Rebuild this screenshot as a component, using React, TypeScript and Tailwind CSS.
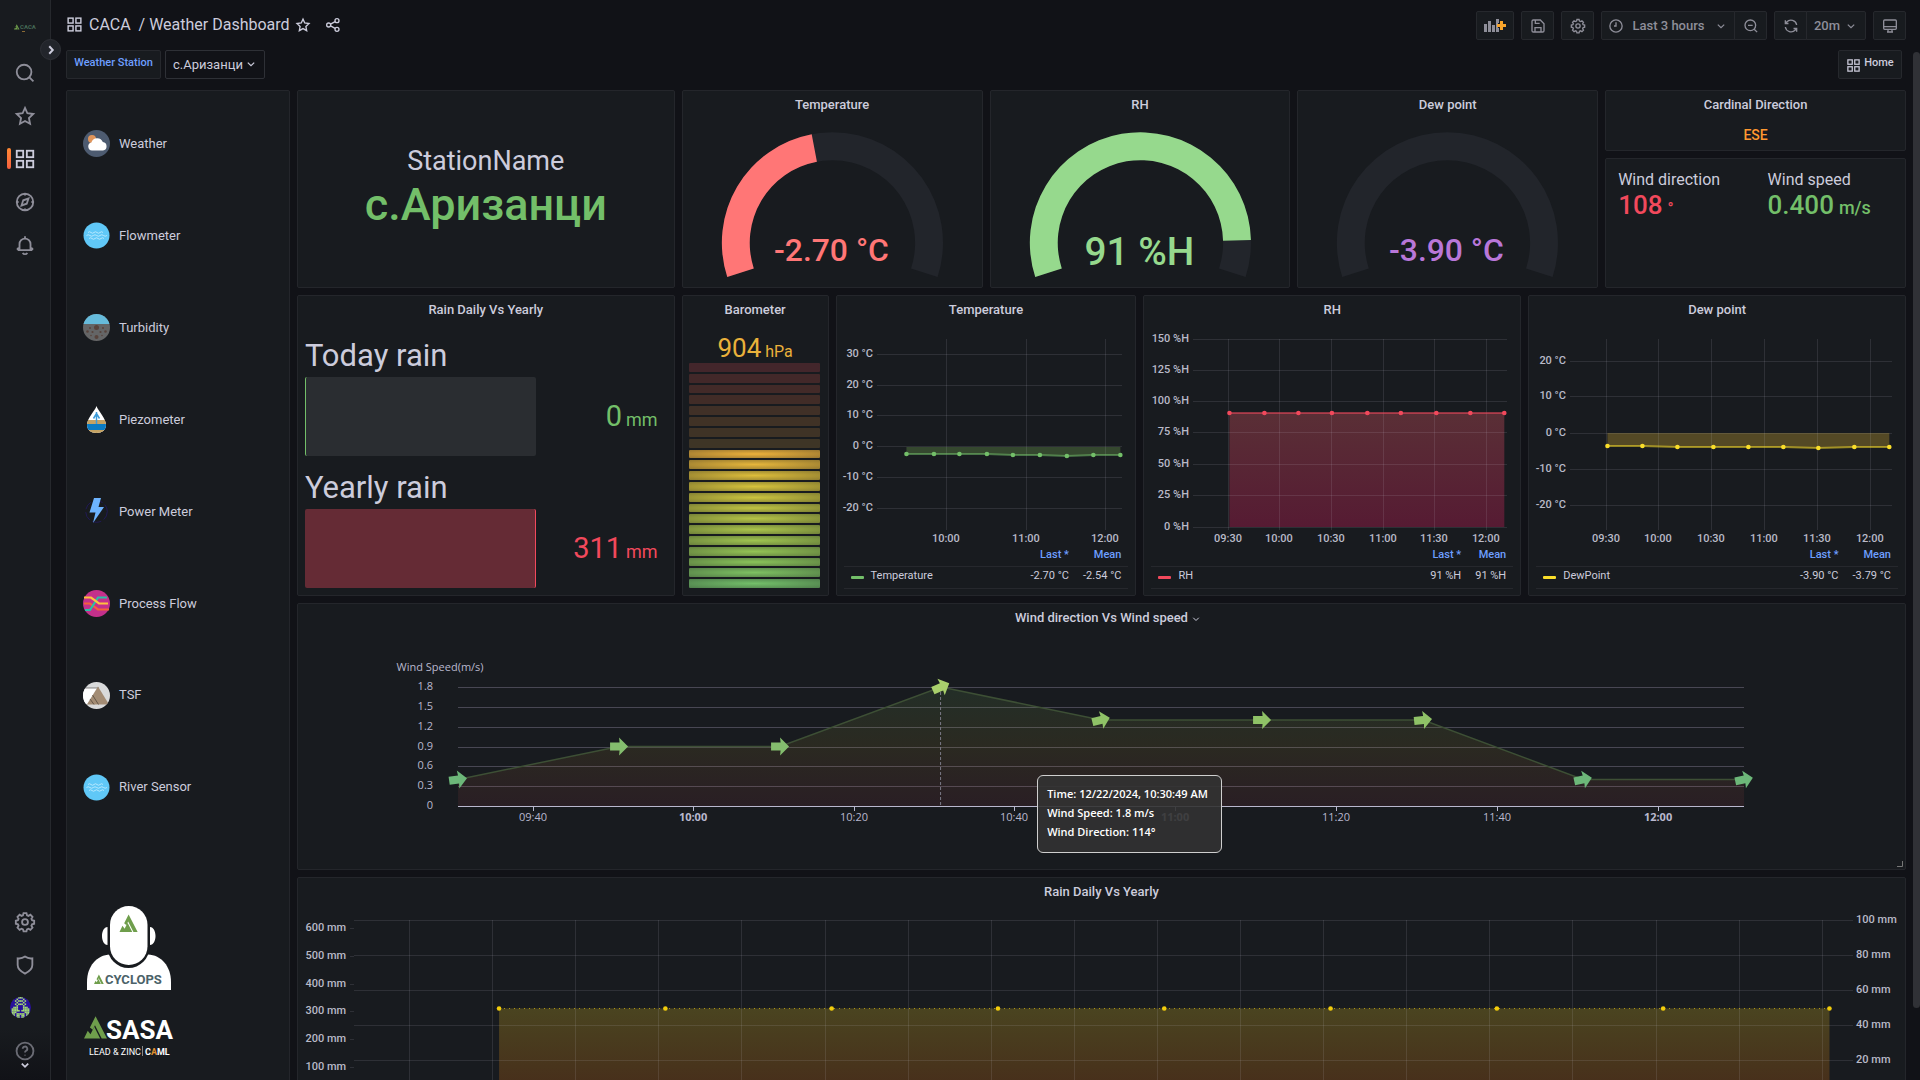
import React from "react";

const ICONS: Record<string, React.ReactNode> = {
  apps: (
    <>
      <rect x="3" y="3" width="7" height="7" />
      <rect x="14" y="3" width="7" height="7" />
      <rect x="3" y="14" width="7" height="7" />
      <rect x="14" y="14" width="7" height="7" />
    </>
  ),
  search: (
    <>
      <circle cx="11" cy="11" r="8" />
      <path d="M16.8 16.8 21.2 21.2" />
    </>
  ),
  star: <path d="M12 3.2 14.6 9l6.4.8-4.7 4.4 1.2 6.3L12 17.4l-5.5 3.1 1.2-6.3L3 9.800l6.400-.8Z" />,
  share: (
    <>
      <circle cx="18" cy="5.500" r="3" />
      <circle cx="5.500" cy="12" r="3" />
      <circle cx="18" cy="18.500" r="3" />
      <path d="M8.300 10.700 15.200 6.900M8.300 13.300l6.900 3.800" />
    </>
  ),
  compass: (
    <>
      <circle cx="12" cy="12" r="9" />
      <path d="m15.800 8.200-1.900 5.700-5.700 1.900 1.900-5.700ZM12 3v2M12 19v2M3 12h2M19 12h2" />
    </>
  ),
  bell: (
    <>
      <path d="M6 17v-6a6 6 0 0 1 12 0v6M4 17.500h16M4 17.500V16l2-1M20 17.500V16l-2-1M12 5V2.500" />
      <path d="M9.500 20.500a2.800 2.800 0 0 0 5 0" />
    </>
  ),
  shield: <path d="M4 4.800c3 .4 5.500-.2 8-2 2.500 1.800 5 2.400 8 2V12c0 4-3 7-8 9.400C7 19 4 16 4 12Z" />,
  help: (
    <>
      <circle cx="12" cy="12" r="9.200" />
      <path d="M9.500 9.600a2.500 2.500 0 1 1 3.700 2.200c-.9.5-1.200.9-1.200 1.900M12 16.200v.8" />
    </>
  ),
  save: (
    <>
      <path d="M3 5a2 2 0 0 1 2-2h10.500L21 8.500V19a2 2 0 0 1-2 2H5a2 2 0 0 1-2-2Z" />
      <path d="M7.500 21v-6.500h9V21M8 3v5h6.500" />
    </>
  ),
  gear: (
    <>
      <path d="M10.400 2.300h3.200l.6 2.300 1.600.7 2.100-1.200 2.300 2.300-1.200 2.100.7 1.600 2.300.6v3.200l-2.300.6-.7 1.600 1.200 2.100-2.300 2.300-2.100-1.200-1.600.7-.6 2.300h-3.200l-.6-2.300-1.600-.7-2.100 1.200-2.300-2.300L5 16.100 4.300 14.500 2 13.900v-3.200l2.300-.6L5 8.500 3.800 6.400l2.300-2.300 2.100 1.200 1.600-.7Z" />
      <circle cx="12" cy="12" r="3.200" />
    </>
  ),
  clock: (
    <>
      <circle cx="12" cy="12" r="9.200" />
      <path d="M12 6.500V12H9" />
    </>
  ),
  zoomOut: (
    <>
      <circle cx="11" cy="11" r="8" />
      <path d="M16.800 16.800 21.200 21.200M7.500 11h7" />
    </>
  ),
  sync: (
    <>
      <path d="M20.500 10.500A8.700 8.700 0 0 0 5.600 6L3.500 8.200M3.500 3.500v4.700h4.700M3.500 13.500A8.700 8.700 0 0 0 18.400 18l2.100-2.200M20.500 20.500v-4.700h-4.700" />
    </>
  ),
  monitor: (
    <>
      <rect x="2.500" y="3" width="19" height="14" rx="1.500" />
      <path d="M2.500 13h19M9 17v4M15 17v4M7.500 21h9" />
    </>
  ),
  down: <path d="m6.500 9.500 5.500 5.500 5.500-5.500" />,
  right: <path d="m8.500 4.500 7 7.500-7 7.500" />,
};

function Icon({ name, className = "size-4", stroke = 2 }: { name: string; className?: string; stroke?: number }) {
  return (
    <svg viewBox="0 0 24 24" className={`shrink-0 ${className}`} fill="none" stroke="currentColor" strokeWidth={stroke} aria-hidden="true">
      {ICONS[name]}
    </svg>
  );
}

/* ---------- sidebar ---------- */

function Peak({ x, y, s, color = "#6f9e4c" }: { x: number; y: number; s: number; color?: string }) {
  return (
    <g transform={`translate(${x} ${y}) scale(${s})`} fill={color}>
      <path d="M5 10.500 9.800 1l9.700 19H15L9.300 8.600 7.500 12.500Z" />
      <path d="M0 20 3.200 13.300l2.300 3L8.700 10l5 10Z" />
    </g>
  );
}

const AVATAR = [
  ".....111.....",
  ".1..1...1..1.",
  "...1.111.1...",
  "....1...1....",
  "...1.111.1...",
  "....1...1....",
  "..111...111..",
  ".1111...1111.",
  ".11111.11111.",
  ".111.....111.",
  ".11.11111.11.",
  "..1.11.11.1..",
  "....11.11....",
];

function Avatar() {
  return (
    <svg viewBox="0 0 26 26" className="size-[21px]" aria-hidden="true">
      <clipPath id="avatar">
        <circle cx="13" cy="13" r="13" />
      </clipPath>
      <g clipPath="url(#avatar)">
        <rect width="26" height="26" fill="#28109c" />
        {AVATAR.flatMap((row, r) =>
          [...row].map((c, i) => (c === "1" ? <rect key={`${r}-${i}`} x={i * 2} y={r * 2} width="2" height="2" fill="#a5dd72" /> : null)),
        )}
      </g>
    </svg>
  );
}

function NavButton({ label, icon, active }: { label: string; icon: string; active?: boolean }) {
  return (
    <button aria-label={label} className={`relative flex h-[43px] w-full items-center justify-center ${active ? "text-[#ccccdc]" : "text-[#8e8e99]"}`}>
      {active && <span className="absolute top-[11px] left-[7px] h-[21px] w-1 rounded-[2px] bg-linear-to-b from-[#ff8833] to-[#f55f3e]" />}
      <Icon name={icon} className="size-[22px]" />
    </button>
  );
}

function Sidebar() {
  return (
    <aside className="relative z-10 flex w-[51px] shrink-0 flex-col border-r border-[#26282d] bg-[#181b1f]">
      <a href="#home" aria-label="Home" className="flex h-[51px] items-center justify-center pt-1">
        <svg viewBox="0 0 24 10" className="h-[10px] w-6">
          <Peak x={1} y={1} s={0.28} />
          <text x="7" y="6" fontSize="6" fontWeight="700" fill="#456a55" fontFamily="Roboto, sans-serif">
            CACA
          </text>
          <rect x="9" y="8" width="3" height="1" fill="#8a6a35" />
        </svg>
      </a>
      <button aria-label="Expand menu" className="absolute top-[39px] left-[40px] flex size-[21px] items-center justify-center rounded-full border border-[#2e3036] bg-[#22252b] text-[#ccccdc]">
        <Icon name="right" className="size-3" stroke={4} />
      </button>
      <nav className="flex flex-1 flex-col">
        <NavButton label="Search" icon="search" />
        <NavButton label="Starred" icon="star" />
        <NavButton label="Dashboards" icon="apps" active />
        <NavButton label="Explore" icon="compass" />
        <NavButton label="Alerting" icon="bell" />
        <div className="mt-auto">
          <NavButton label="Configuration" icon="gear" />
          <NavButton label="Server admin" icon="shield" />
          <button aria-label="Profile" className="flex h-[43px] w-full items-center pl-[10px]">
            <Avatar />
          </button>
        </div>
      </nav>
      <button aria-label="Help" className="flex h-[51px] flex-col items-center bg-linear-to-b from-[#181b1f] to-[#111217] pt-[11px] text-[#6b6c75]">
        <Icon name="help" className="size-[22px]" />
        <Icon name="down" className="-mt-1 size-[14px] text-[#ccccdc]" stroke={3} />
      </button>
    </aside>
  );
}

/* ---------- header ---------- */

const toolBtn = "flex h-[29px] items-center justify-center border border-[#26282d] bg-[#181b1f] text-[#8e8e99]";

function Header() {
  return (
    <header className="flex h-[50px] items-start justify-between pt-[11px]">
      <div className="flex h-[27px] items-center text-[#ccccdc]">
        <Icon name="apps" className="mr-[6px] size-[17px]" />
        <h1 className="text-base whitespace-pre">
          <a href="#caca">CACA</a>
          {"  / "}
          <a href="#dashboard">Weather Dashboard</a>
        </h1>
        <button aria-label="Mark as favorite" className="mt-px ml-[5px]">
          <Icon name="star" />
        </button>
        <button aria-label="Share dashboard" className="mt-px ml-[14px]">
          <Icon name="share" />
        </button>
      </div>
      <div className="flex gap-[7px] text-[13px] font-medium">
        <button aria-label="Add panel" className={`${toolBtn} w-[38px] rounded-[2px]`}>
          <svg viewBox="0 0 22 14" className="h-[14px] w-[22px]">
            <path fill="#8e8e99" d="M0 5h3v8H0ZM4 2h3v11H4ZM8 6h3v7H8ZM12 0h3v4h-1v5h1v4h-3Z" />
            <path fill="#f9a52b" d="M16 2h3v3h3v3h-3v3h-3V8h-3V5h3Z" />
          </svg>
        </button>
        <button aria-label="Save dashboard" className={`${toolBtn} w-[33px] rounded-[2px]`}>
          <Icon name="save" />
        </button>
        <button aria-label="Dashboard settings" className={`${toolBtn} w-[33px] rounded-[2px]`}>
          <Icon name="gear" />
        </button>
        <div className="flex">
          <button className={`${toolBtn} w-[134px] rounded-l-[2px]`}>
            <Icon name="clock" />
            <span className="mr-[9px] ml-2">Last 3 hours</span>
            <Icon name="down" className="size-[14px]" />
          </button>
          <button aria-label="Zoom out time range" className={`${toolBtn} -ml-px w-[33px] rounded-r-[2px]`}>
            <Icon name="zoomOut" />
          </button>
        </div>
        <div className="flex">
          <button aria-label="Refresh dashboard" className={`${toolBtn} w-[33px] rounded-l-[2px]`}>
            <Icon name="sync" />
          </button>
          <button className={`${toolBtn} -ml-px w-[60px] gap-1 rounded-r-[2px]`}>
            20m
            <Icon name="down" className="size-[14px]" />
          </button>
        </div>
        <button aria-label="Cycle view mode" className={`${toolBtn} w-[33px] rounded-[2px]`}>
          <Icon name="monitor" />
        </button>
      </div>
    </header>
  );
}

function Submenu() {
  return (
    <div className="flex gap-1 pr-1">
      <label htmlFor="station" className="flex h-[29px] w-[95px] items-center justify-center rounded-[2px] border border-[#26282d] bg-[#181b1f] pb-[2px] text-[11px] font-medium text-[#6e9fff]">
        Weather Station
      </label>
      <div className="relative h-[29px]">
        <select id="station" className="h-full w-[100px] appearance-none rounded-[2px] border border-[#2e3036] bg-[#111217] pl-[7px] text-[13px] text-[#ccccdc]">
          <option>с.Аризанци</option>
        </select>
        <Icon name="down" className="pointer-events-none absolute top-[7px] right-[7px] size-[14px] text-[#ccccdc]" />
      </div>
      <a href="#home" className="ml-auto flex h-[29px] w-16 items-center justify-center gap-[3px] rounded-[2px] border border-[#26282d] bg-[#181b1f] text-[11px] font-medium text-[#ccccdc]">
        <Icon name="apps" className="mt-[2px] size-[15px]" />
        <span className="pb-[2px]">Home</span>
      </a>
    </div>
  );
}

/* ---------- panels ---------- */

function Panel({ title, caret, className = "", children }: { title?: string; caret?: boolean; className?: string; children?: React.ReactNode }) {
  return (
    <section className={`flex min-w-0 flex-col rounded-[2px] border border-[#24262b] bg-[#181b1f] ${className}`}>
      {title && (
        <h2 className="flex h-7 shrink-0 items-center justify-center text-[13px] font-medium text-[#ccccdc]">
          <span className="relative">
            {title}
            {caret && <Icon name="down" className="absolute top-[5px] left-full ml-[2px] size-3" />}
          </span>
        </h2>
      )}
      {children}
    </section>
  );
}

function arc(cx: number, cy: number, ro: number, ri: number, a0: number, a1: number) {
  const p = (r: number, a: number) => {
    const t = (a * Math.PI) / 180;
    return `${(cx + r * Math.cos(t)).toFixed(2)} ${(cy + r * Math.sin(t)).toFixed(2)}`;
  };
  const large = a1 - a0 > 180 ? 1 : 0;
  return `M${p(ro, a0)}A${ro} ${ro} 0 ${large} 1 ${p(ro, a1)}L${p(ri, a1)}A${ri} ${ri} 0 ${large} 0 ${p(ri, a0)}Z`;
}

function Gauge({ title, text, value, color, size, baseline }: { title: string; text: string; value: number; color: string; size: number; baseline: number }) {
  return (
    <Panel title={title} className="col-span-4">
      <svg viewBox="0 0 300 168" className="min-h-0 w-full flex-1" role="img" aria-label={`${title} ${text}`}>
        <path d={arc(150, 124, 111, 83, 162, 378)} fill="#22252b" />
        {value > 0 && <path d={arc(150, 124, 111, 83, 162, 162 + 216 * value)} fill={color} />}
        <text x="149" y={baseline} textAnchor="middle" fontSize={size} fontWeight="500" fill={color}>
          {text}
        </text>
      </svg>
    </Panel>
  );
}

function RainBar({ label, value, red }: { label: string; value: string; red?: boolean }) {
  return (
    <div>
      <div className="h-[43px] text-[31px] leading-[43px] text-[#ccccdc]">{label}</div>
      <div className="flex items-center">
        <div className={red ? "h-[79px] w-[64%] rounded-[2px] border-r border-[#f2495c] bg-[#652b35]" : "h-[79px] w-[64%] rounded-[2px] border-l border-[#73bf69] bg-[#2a2d31]"} />
        <div className={`flex-1 pr-[9px] text-right text-[29px] ${red ? "text-[#f2495c]" : "text-[#73bf69]"}`}>
          {value}
          <span className="ml-1 text-lg">mm</span>
        </div>
      </div>
    </div>
  );
}

const UNLIT = ["#43262b", "#422829", "#422a28", "#412c27", "#403027", "#403226", "#3f3326", "#3e3526"];
const LIT = ["#ecb13b", "#e6b63b", "#ddbd3b", "#d6c33c", "#cbc43f", "#c0c443", "#b5c447", "#aac44b", "#9fc450", "#94c355", "#8ac35a", "#7ec162", "#73bf69"];

type Tick = [string, number];

function TimeSeries(props: {
  id: string;
  width: number;
  left: number;
  right: number;
  zero: number;
  yTicks: Tick[];
  xTicks: Tick[];
  points: [number, number][];
  color: string;
  fill: [string, string];
}) {
  const { id, width, left, right, zero, yTicks, xTicks, points, color, fill } = props;
  const line = points.map(([x, y]) => `${x} ${y}`).join("L");
  return (
    <svg viewBox={`0 0 ${width} 223`} className="h-[223px] w-full shrink-0" role="img" aria-label={id} fontSize="11" fontWeight="500" fill="#b9bac8">
      <linearGradient id={id} x1="0" y1="0" x2="0" y2="1">
        <stop offset="0" stopColor={fill[0]} />
        <stop offset="1" stopColor={fill[1]} />
      </linearGradient>
      <path d={`M${points[0][0]} ${zero}L${line}L${points[points.length - 1][0]} ${zero}Z`} fill={`url(#${id})`} />
      <g stroke="#ccccdc" strokeOpacity="0.12" shapeRendering="crispEdges">
        {yTicks.map(([t, y]) => (
          <line key={t} x1={left} x2={right} y1={y + 0.5} y2={y + 0.5} />
        ))}
        {xTicks.map(([t, x]) => (
          <line key={t} x1={x + 0.5} x2={x + 0.5} y1="15" y2="206" />
        ))}
      </g>
      <path d={`M${line}`} fill="none" stroke={color} strokeOpacity="0.55" strokeWidth="2" />
      {points.map(([x, y]) => (
        <circle key={x} cx={x} cy={y} r="2.300" fill={color} />
      ))}
      {yTicks.map(([t, y]) => (
        <text key={t} x={left - 4} y={y + 3} textAnchor="end">
          {t}
        </text>
      ))}
      {xTicks.map(([t, x]) => (
        <text key={t} x={x} y="218" textAnchor="middle">
          {t}
        </text>
      ))}
    </svg>
  );
}

function Legend({ name, color, last, mean }: { name: string; color: string; last: string; mean: string }) {
  return (
    <table className="mx-[7px] border-collapse text-[11px] leading-[14px] text-[#ccccdc]">
      <thead>
        <tr className="h-[19px] border-b border-[#26282d] text-[#6e9fff]">
          <th className="w-full" aria-label="Series" />
          <th className="px-[7px] pb-[2px] text-right font-medium whitespace-nowrap">Last *</th>
          <th className="px-[7px] pb-[2px] text-right font-medium">Mean</th>
        </tr>
      </thead>
      <tbody>
        <tr className="h-[22px] border-b border-[#26282d]">
          <td className="px-[7px] pb-[2px]">
            <span className="flex items-center gap-[7px]">
              <span className={`mt-[2px] h-[3px] w-[13px] rounded-[1px] ${color}`} />
              {name}
            </span>
          </td>
          <td className="px-[7px] pb-[2px] text-right whitespace-nowrap">{last}</td>
          <td className="px-[7px] pb-[2px] text-right whitespace-nowrap">{mean}</td>
        </tr>
      </tbody>
    </table>
  );
}

/* ---------- station list ---------- */

function WaveIcon() {
  return (
    <svg viewBox="0 0 27 27" className="size-[27px]" aria-hidden="true">
      <circle cx="13.500" cy="13.500" r="13" fill="#60c8f7" />
      <g fill="none" stroke="#c9efff" strokeWidth="0.800">
        <path d="M5 10.500q1.500-1.500 3 0t3 0 3 0 3 0 3 0" />
        <path d="M3.500 13.500q1.700-1.500 3.400 0t3.400 0 3.400 0 3.400 0 3.400 0 3.400 0" />
        <path d="M6 16.500q1.500-1.500 3 0t3 0 3 0 3 0 3 0" />
      </g>
    </svg>
  );
}

const STATIONS: { name: string; icon: React.ReactNode }[] = [
  {
    name: "Weather",
    icon: (
      <svg viewBox="0 0 27 27" className="size-[27px]" aria-hidden="true">
        <circle cx="13.500" cy="13.500" r="13.500" fill="#4d5b70" />
        <circle cx="9" cy="9" r="4" fill="#e0955b" />
        <path fill="#fff" d="M9 20.500a4 4 0 0 1-.6-7.900A6 6 0 0 1 19.800 12a4.300 4.300 0 0 1 .2 8.500Z" />
      </svg>
    ),
  },
  { name: "Flowmeter", icon: <WaveIcon /> },
  {
    name: "Turbidity",
    icon: (
      <svg viewBox="0 0 27 27" className="size-[27px]" aria-hidden="true">
        <clipPath id="turb">
          <circle cx="13.500" cy="13.500" r="13.500" />
        </clipPath>
        <g clipPath="url(#turb)">
          <rect width="27" height="27" fill="#646566" />
          <rect width="27" height="10" fill="#66bbdb" />
          <g fill="#57433c">
            <circle cx="13.500" cy="13.500" r="2.500" />
            <circle cx="13.500" cy="23" r="2" />
            <circle cx="7" cy="14" r="1" />
            <circle cx="20" cy="14" r="1" />
            <circle cx="4.500" cy="17.500" r="1.300" />
            <circle cx="22.500" cy="17.500" r="1.300" />
            <circle cx="9.500" cy="18" r="1.100" />
            <circle cx="17.500" cy="18" r="1.100" />
            <circle cx="8" cy="21.500" r="0.800" />
            <circle cx="19" cy="21.500" r="0.800" />
          </g>
        </g>
      </svg>
    ),
  },
  {
    name: "Piezometer",
    icon: (
      <svg viewBox="0 0 27 27" className="size-[27px]" aria-hidden="true">
        <clipPath id="drop">
          <path d="M13.500 0C15 5 23 12 23 19c0 5-4 8-9.500 8S4 24 4 19C4 12 12 5 13.500 0Z" />
        </clipPath>
        <g clipPath="url(#drop)">
          <rect width="27" height="27" fill="#fff" />
          <rect y="14" width="27" height="4" fill="#c4a262" />
          <rect y="18" width="27" height="6" fill="#0a7cc4" />
          <rect y="24" width="27" height="3" fill="#c4a262" />
        </g>
        <path d="M13.500 6v12M10.500 12.500l3-5 3 5" fill="none" stroke="#3c9bd9" strokeWidth="1.500" />
      </svg>
    ),
  },
  {
    name: "Power Meter",
    icon: (
      <svg viewBox="0 0 27 27" className="size-[27px]" aria-hidden="true">
        <circle cx="13.500" cy="13.500" r="10.800" fill="none" stroke="#211a55" strokeWidth="1" strokeDasharray="9 3" />
        <path d="M11 0h7l-2.500 9H21L10 25l2.500-10.500H6.500Z" fill="#6db4ff" />
      </svg>
    ),
  },
  {
    name: "Process Flow",
    icon: (
      <svg viewBox="0 0 27 27" className="size-[27px]" aria-hidden="true">
        <circle cx="13.500" cy="13.500" r="13.500" fill="#c4308b" />
        <g fill="none" strokeWidth="2.200">
          <path d="M1 13.500h6l8 6h11" stroke="#f4623a" />
          <path d="M2 20h5L15 7.500h9" stroke="#2bc0a5" />
          <path d="M1 7.500h7l8 6h9" stroke="#ffc23d" />
        </g>
      </svg>
    ),
  },
  {
    name: "TSF",
    icon: (
      <svg viewBox="0 0 27 27" className="size-[27px]" aria-hidden="true">
        <clipPath id="tsf">
          <circle cx="13.500" cy="13.500" r="13.500" />
        </clipPath>
        <g clipPath="url(#tsf)">
          <rect width="27" height="27" fill="#d9dadb" />
          <path d="M0 6h15L4 22H0Z" fill="#fff" />
          <path d="M2 6h14" stroke="#555" strokeWidth="0.700" />
          <path d="M15 4.500 26 22.500H4Z" fill="#a38c74" />
          <path d="m7 17 4 5.500M9.500 13l6 9.500" stroke="#54483c" strokeWidth="0.800" />
        </g>
      </svg>
    ),
  },
  { name: "River Sensor", icon: <WaveIcon /> },
];

function StationPanel() {
  return (
    <Panel className="col-span-3 row-span-4">
      <ul className="mt-[7px] flex h-[735px] shrink-0 flex-col px-4">
        {STATIONS.map((s) => (
          <li key={s.name} className="flex flex-1 items-center">
            <a href={`#${s.name}`} className="flex items-center gap-[9px] text-[13px] text-[#ccccdc]">
              {s.icon}
              {s.name}
            </a>
          </li>
        ))}
      </ul>
      <svg viewBox="0 0 84 84" className="mt-[73px] ml-5 size-[84px] shrink-0" role="img" aria-label="Cyclops">
        <path d="M0 84V76C0 60 10 49 23 48.500h38C74 49 84 60 84 76v8Z" fill="#fff" />
        <rect x="20.500" y="-3" width="42" height="65" rx="21" fill="#181b1f" />
        <rect x="23" y="0" width="37.500" height="59" rx="18.700" fill="#fff" />
        <path d="M20.500 21C17 21 15 25.500 15 30s2 9 5.500 9ZM63 21c3.500 0 5.500 4.500 5.500 9s-2 9-5.500 9Z" fill="#fff" />
        <Peak x={32.500} y={7.500} s={0.930} />
        <Peak x={7} y={68} s={0.500} />
        <text x="18" y="78" fontSize="13" fontWeight="700" fill="#4b6268">
          CYCLOPS
        </text>
      </svg>
      <svg viewBox="0 0 94 42" className="mt-[25px] ml-[17px] h-[42px] w-[94px] shrink-0" role="img" aria-label="SASA Lead & Zinc CAML">
        <Peak x={0} y={0} s={1.180} />
        <text x="22" y="23.500" fontSize="26" fontWeight="700" fill="#fff">
          SASA
        </text>
        <text x="5" y="40" fontSize="9" fill="#fff">
          LEAD &amp; ZINC
        </text>
        <rect x="58" y="31" width="1" height="10" fill="#888" />
        <text x="61" y="40" fontSize="9" fontWeight="700" fill="#fff">
          C<tspan fill="#e0902f">A</tspan>ML
        </text>
      </svg>
    </Panel>
  );
}

/* ---------- wind chart ---------- */

const WIND_POINTS: [number, number, number, string][] = [
  [160, 147.500, -8, "#6cb779"],
  [321, 114.500, 0, "#84bd6e"],
  [482, 114.500, 0, "#84bd6e"],
  [643, 55, -24, "#a9d06c"],
  [803, 88, -14, "#8fc267"],
  [964, 88, 0, "#8fc267"],
  [1125, 88, -6, "#8fc267"],
  [1285, 147.500, -12, "#6cb779"],
  [1446, 147.500, -12, "#6cb779"],
];
const WIND_Y: Tick[] = [["1.8", 55], ["1.5", 75], ["1.2", 95], ["0.9", 115], ["0.6", 134], ["0.3", 154], ["0", 174]];
const WIND_X: Tick[] = [["09:40", 235], ["10:00", 395], ["10:20", 556], ["10:40", 716], ["11:00", 877], ["11:20", 1038], ["11:40", 1199], ["12:00", 1360]];

function WindChart() {
  const line = WIND_POINTS.map(([x, y]) => `${x} ${y}`).join("L");
  return (
    <div className="relative font-['Open_Sans',sans-serif]">
      <svg viewBox="0 0 1607 237" className="h-[237px] w-full" role="img" aria-label="Wind speed over time" fontSize="11" fill="#b9b8ce">
        <linearGradient id="wind" x1="0" y1="0" x2="0" y2="1">
          <stop offset="0" stopColor="#73bf69" stopOpacity="0.120" />
          <stop offset="0.500" stopColor="#c0a030" stopOpacity="0.110" />
          <stop offset="1" stopColor="#f2495c" stopOpacity="0.080" />
        </linearGradient>
        <g stroke="#484753" shapeRendering="crispEdges">
          {WIND_Y.slice(0, 6).map(([t, y]) => (
            <line key={t} x1="160" x2="1446" y1={y + 0.5} y2={y + 0.5} />
          ))}
        </g>
        <path d={`M160 174L${line}L1446 174Z`} fill="url(#wind)" />
        <path d={`M${line}`} fill="none" stroke="#3d4f35" strokeWidth="1.500" />
        <g stroke="#b9b8ce" shapeRendering="crispEdges">
          <line x1="160" x2="1446" y1="174.500" y2="174.500" />
          {WIND_X.map(([t, x]) => (
            <line key={t} x1={x + 0.5} x2={x + 0.5} y1="174" y2="179" />
          ))}
        </g>
        <line x1="642.500" x2="642.500" y1="55" y2="174" stroke="#7a7986" strokeDasharray="3 2" />
        {WIND_POINTS.map(([x, y, a, c]) => (
          <path key={x} d="M-9-4H0.500L0-9 9 0 0 9 0.500 4H-9Z" fill={c} transform={`translate(${x} ${y}) rotate(${a})`} />
        ))}
        <text x="142" y="39" textAnchor="middle">
          Wind Speed(m/s)
        </text>
        {WIND_Y.map(([t, y]) => (
          <text key={t} x="135" y={y + 3} textAnchor="end">
            {t}
          </text>
        ))}
        {WIND_X.map(([t, x]) => (
          <text key={t} x={x} y="189" textAnchor="middle" fontWeight={t.endsWith(":00") ? 700 : 400}>
            {t}
          </text>
        ))}
      </svg>
      <div role="tooltip" className="absolute top-[143px] left-[46%] h-[78px] min-w-[185px] rounded-md border border-[#cfcfcf] bg-[#323232]/90 px-[9px] pt-2 text-[11px] leading-[19px] font-semibold whitespace-nowrap text-white">
        <div>Time: 12/22/2024, 10:30:49 AM</div>
        <div>Wind Speed: 1.8 m/s</div>
        <div>Wind Direction: 114°</div>
      </div>
      <svg viewBox="0 0 6 6" className="absolute right-[2px] bottom-[2px] size-[6px]" aria-hidden="true">
        <path d="M5.500 0v5.500H0" fill="none" stroke="#777" />
      </svg>
    </div>
  );
}

/* ---------- rain chart ---------- */

const RAIN_LEFT: Tick[] = [["600 mm", 22], ["500 mm", 50], ["400 mm", 78], ["300 mm", 105], ["200 mm", 133], ["100 mm", 161]];
const RAIN_RIGHT: Tick[] = [["100 mm", 14], ["80 mm", 49], ["60 mm", 84], ["40 mm", 119], ["20 mm", 154]];
const RAIN_COLS = Array.from({ length: 18 }, (_, i) => Math.round(111 + i * 83.1));
const RAIN_POINTS = Array.from({ length: 9 }, (_, i) => 201 + i * 166.3);

function RainChart() {
  return (
    <svg viewBox="0 0 1607 230" className="h-[230px] w-full" role="img" aria-label="Rain daily vs yearly" fontSize="11" fontWeight="500" fill="#b9bac8">
      <linearGradient id="rain" x1="0" y1="0" x2="0" y2="1">
        <stop offset="0" stopColor="#4a4420" />
        <stop offset="1" stopColor="#472c1a" />
      </linearGradient>
      <rect x="201" y="102.500" width="1330.400" height="87" fill="url(#rain)" />
      <g stroke="#ccccdc" strokeOpacity="0.120" shapeRendering="crispEdges">
        {RAIN_RIGHT.map(([t, y]) => (
          <line key={t} x1="56" x2="1555" y1={y + 0.5} y2={y + 0.5} />
        ))}
        {RAIN_LEFT.map(([t, y]) => (
          <line key={t} x1="52" x2="56" y1={y + 0.5} y2={y + 0.5} />
        ))}
        {RAIN_COLS.map((x) => (
          <line key={x} x1={x + 0.5} x2={x + 0.5} y1="14" y2="189" />
        ))}
      </g>
      <line x1="201" x2="1531" y1="102.500" y2="102.500" stroke="#f2cc0c" strokeOpacity="0.700" strokeDasharray="1 4" />
      {RAIN_POINTS.map((x) => (
        <circle key={x} cx={x} cy="102.500" r="2.300" fill="#f2cc0c" />
      ))}
      {RAIN_LEFT.map(([t, y]) => (
        <text key={t} x="48" y={y + 3} textAnchor="end">
          {t}
        </text>
      ))}
      {RAIN_RIGHT.map(([t, y]) => (
        <text key={t} x="1558" y={y + 3}>
          {t}
        </text>
      ))}
    </svg>
  );
}

/* ---------- page ---------- */

const TEMP_X = [69.5, 97, 122.5, 150, 176, 203, 230, 256.5, 283.5];
const TEMP_Y = [130, 130, 130, 130, 131, 131, 132, 131, 131];
const RH_X = [85.5, 120.5, 154.5, 188, 223.5, 257, 292.5, 326.5, 360.5];
const DEW_X = [78.5, 113.5, 148.5, 184.5, 219.5, 254.5, 289.5, 325.5, 360.5];
const DEW_Y = [122, 122, 123, 123, 123, 123, 124, 123, 123];

export default function App() {
  return (
    <div className="flex h-screen overflow-hidden bg-[#111217] font-[Roboto,sans-serif] text-[#ccccdc]">
      <Sidebar />
      <main className="min-w-0 flex-1 overflow-hidden pr-[7px] pl-[15px]">
        <Header />
        <Submenu />
        <div className="mt-[11px] grid grid-cols-24 grid-rows-[198px_301px_267px_266px] gap-[7px]">
          <StationPanel />

          <Panel className="col-span-5 items-center justify-center">
            <div className="text-[27px] leading-8">StationName</div>
            <div className="text-[45px] leading-[56px] font-medium text-[#73bf69]">с.Аризанци</div>
          </Panel>
          <Gauge title="Temperature" text="-2.70 °C" value={0.45} color="#ff7676" size={32} baseline={142} />
          <Gauge title="RH" text="91 %H" value={0.91} color="#96d98d" size={39} baseline={146} />
          <Gauge title="Dew point" text="-3.90 °C" value={0} color="#b877d9" size={32} baseline={142} />
          <div className="col-span-4 flex flex-col gap-[7px]">
            <Panel title="Cardinal Direction" className="h-[61px]">
              <div className="pt-[6px] text-center text-sm leading-5 font-medium text-[#ff9830]">ESE</div>
            </Panel>
            <Panel className="flex-1">
              <div className="grid grid-cols-2 px-3 pt-[9px]">
                <div>
                  <div className="text-base leading-6">Wind direction</div>
                  <div className="text-[26px] leading-[26px] font-medium text-[#f2495c]">
                    108<span className="ml-[5px] text-base">°</span>
                  </div>
                </div>
                <div className="pl-3">
                  <div className="text-base leading-6">Wind speed</div>
                  <div className="text-[26px] leading-[26px] font-medium text-[#73bf69]">
                    0.400<span className="ml-[5px] text-lg">m/s</span>
                  </div>
                </div>
              </div>
            </Panel>
          </div>

          <Panel title="Rain Daily Vs Yearly" className="col-span-5">
            <div className="flex flex-col gap-[10px] px-[7px] pt-[10px]">
              <RainBar label="Today rain" value="0" />
              <RainBar label="Yearly rain" value="311" red />
            </div>
          </Panel>
          <Panel title="Barometer" className="col-span-2">
            <div className="h-[39px] pt-2 text-center text-[26px] leading-8 text-[#eab13b]">
              904<span className="ml-1 text-base">hPa</span>
            </div>
            <div className="mr-[8px] mb-[7px] ml-[6px] flex flex-1 flex-col gap-[2px]">
              {UNLIT.map((c) => (
                <div key={c} className="flex-1 rounded-[1px]" style={{ backgroundColor: c }} />
              ))}
              {LIT.map((c) => (
                <div key={c} className="flex-1 rounded-[1px] bg-[radial-gradient(ellipse_at_center,transparent,rgba(24,27,31,0.4))]" style={{ backgroundColor: c }} />
              ))}
            </div>
          </Panel>
          <Panel title="Temperature" className="col-span-4">
            <TimeSeries
              id="temperature"
              width={299}
              left={40}
              right={285}
              zero={123}
              yTicks={[["30 °C", 30], ["20 °C", 61], ["10 °C", 91], ["0 °C", 122], ["-10 °C", 153], ["-20 °C", 184]]}
              xTicks={[["10:00", 109], ["11:00", 189], ["12:00", 268]]}
              points={TEMP_X.map((x, i) => [x, TEMP_Y[i]])}
              color="#73bf69"
              fill={["#35482f", "#35482f"]}
            />
            <Legend name="Temperature" color="bg-[#73bf69]" last="-2.70 °C" mean="-2.54 °C" />
          </Panel>
          <Panel title="RH" className="col-span-5">
            <TimeSeries
              id="rh"
              width={376}
              left={49}
              right={363}
              zero={203}
              yTicks={[["150 %H", 15], ["125 %H", 46], ["100 %H", 77], ["75 %H", 108], ["50 %H", 140], ["25 %H", 171], ["0 %H", 203]]}
              xTicks={[["09:30", 84], ["10:00", 135], ["10:30", 187], ["11:00", 239], ["11:30", 290], ["12:00", 342]]}
              points={RH_X.map((x) => [x, 89])}
              color="#f2495c"
              fill={["#5a2f36", "#561b33"]}
            />
            <Legend name="RH" color="bg-[#f2495c]" last="91 %H" mean="91 %H" />
          </Panel>
          <Panel title="Dew point" className="col-span-5">
            <TimeSeries
              id="dewpoint"
              width={376}
              left={41}
              right={363}
              zero={109}
              yTicks={[["20 °C", 37], ["10 °C", 72], ["0 °C", 109], ["-10 °C", 145], ["-20 °C", 181]]}
              xTicks={[["09:30", 77], ["10:00", 129], ["10:30", 182], ["11:00", 235], ["11:30", 288], ["12:00", 341]]}
              points={DEW_X.map((x, i) => [x, DEW_Y[i]])}
              color="#fade2a"
              fill={["#544925", "#544925"]}
            />
            <Legend name="DewPoint" color="bg-[#fade2a]" last="-3.90 °C" mean="-3.79 °C" />
          </Panel>

          <Panel title="Wind direction Vs Wind speed" caret className="col-span-21">
            <WindChart />
          </Panel>
          <Panel title="Rain Daily Vs Yearly" className="col-span-21">
            <RainChart />
          </Panel>
        </div>
      </main>
      <div className="w-[7px] shrink-0 pt-[52px]" aria-hidden="true">
        <div className="h-[93%] rounded-full bg-[#303136]" />
      </div>
    </div>
  );
}
